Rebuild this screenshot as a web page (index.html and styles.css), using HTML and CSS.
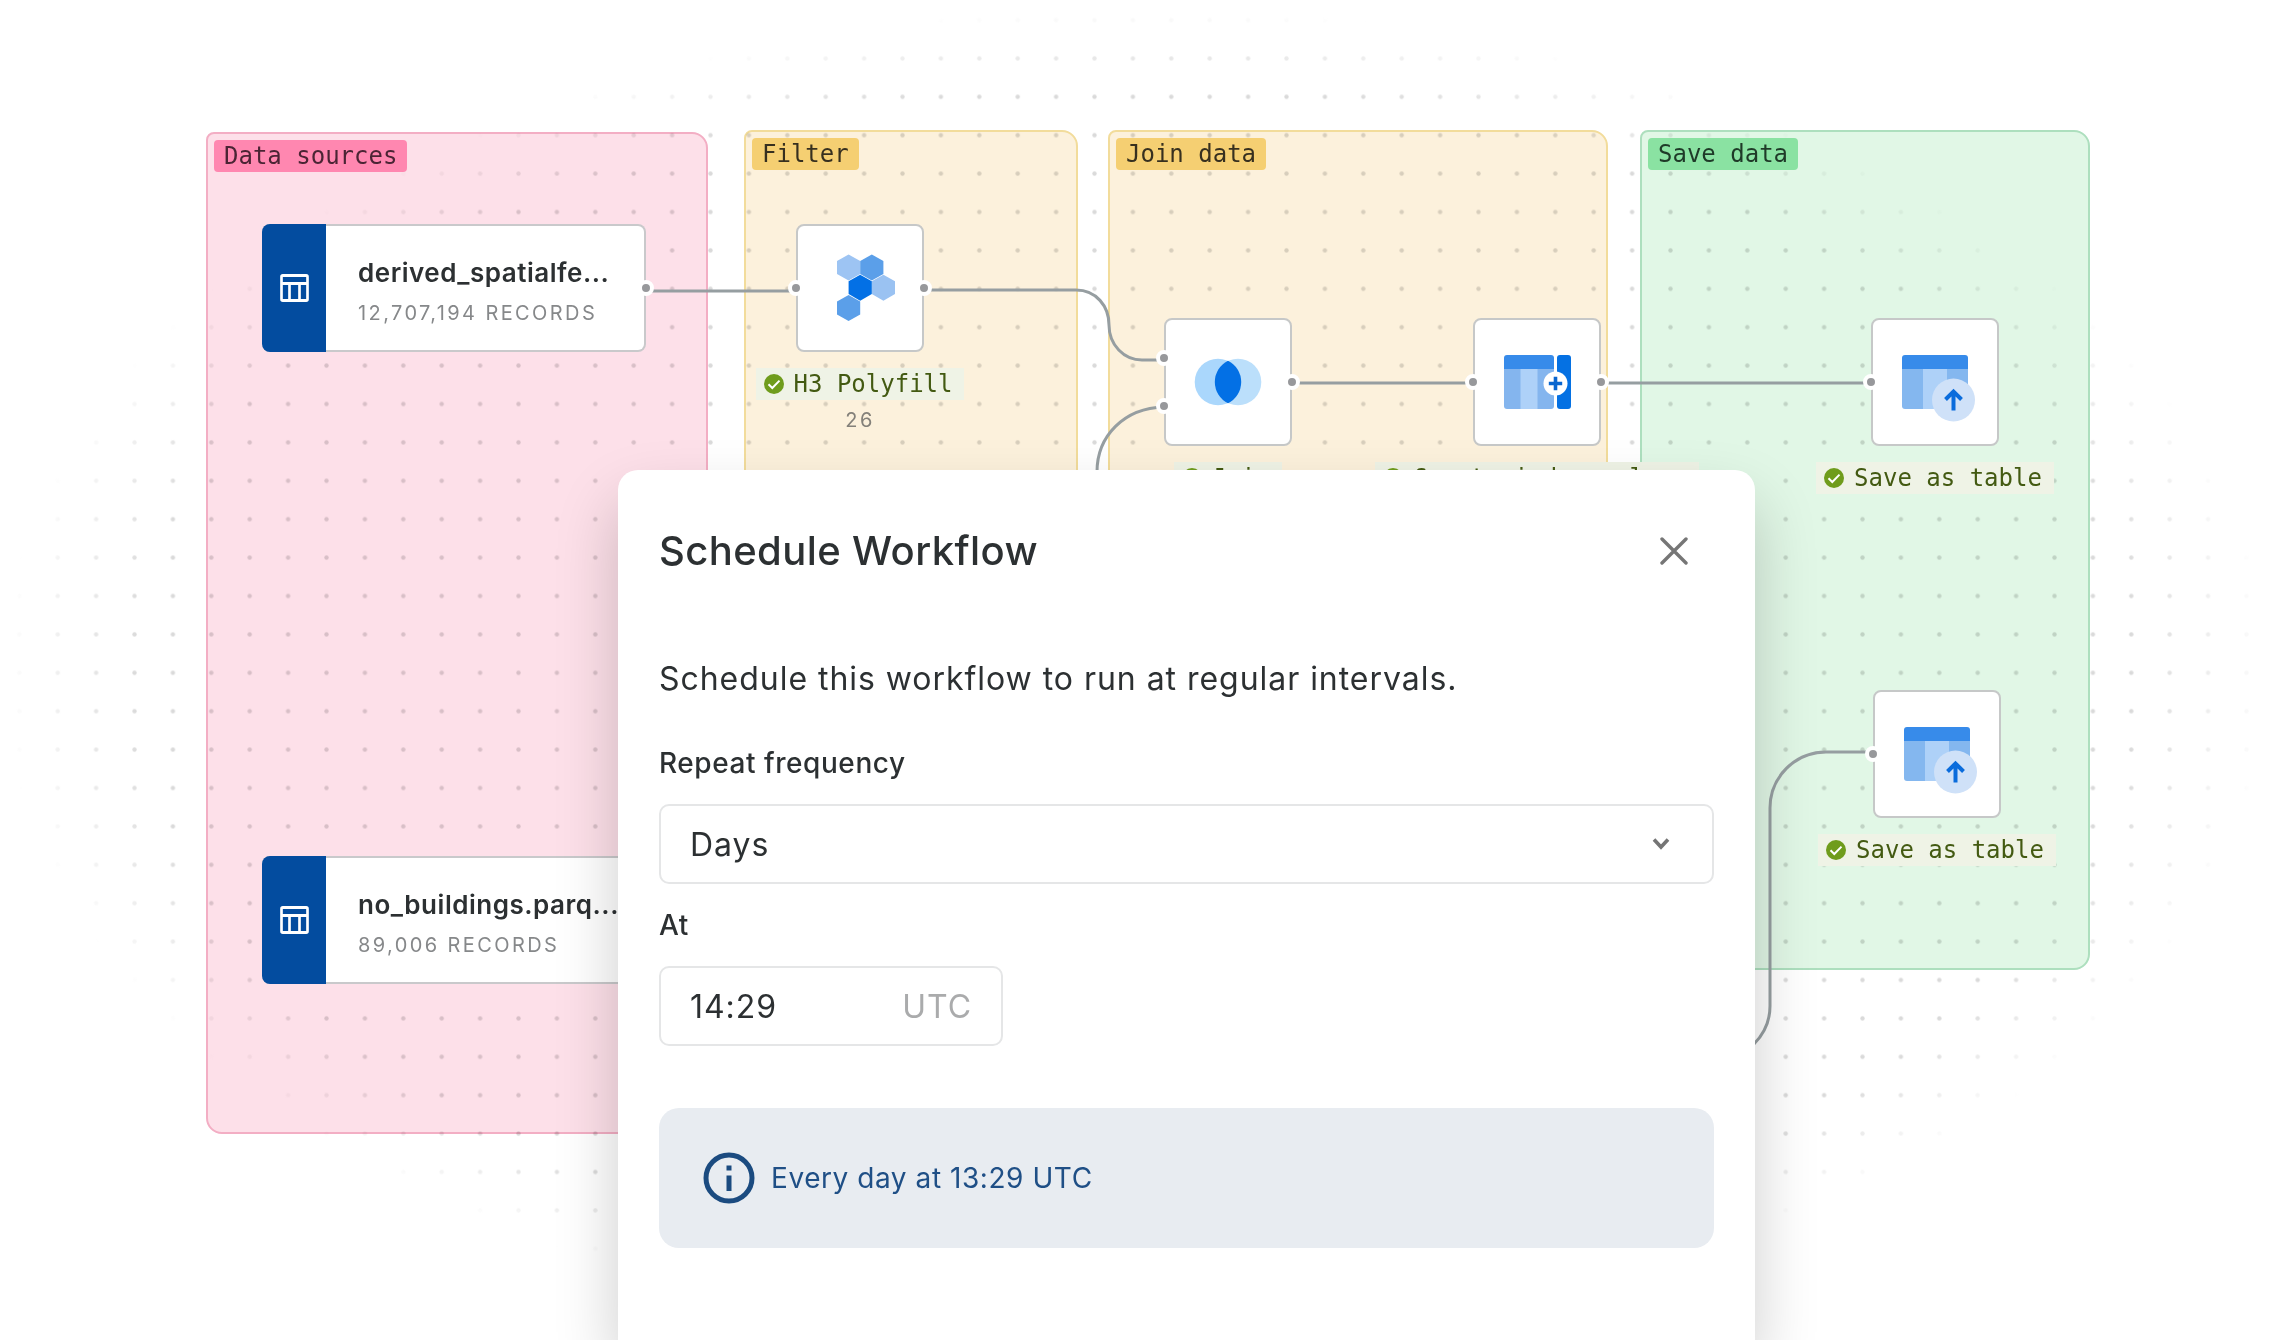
FILE: index.html
```html
<!DOCTYPE html>
<html lang="en">
<head>
    <meta charset="UTF-8">
    <meta name="viewport" content="width=device-width, initial-scale=1.0">
    <title>Schedule Workflow</title>
    <link rel="stylesheet" href="styles.css">
</head>
<body>
    <!-- shared icons -->
    <svg width="0" height="0" class="sprite" aria-hidden="true">
        <symbol id="icon-table" viewBox="0 0 86 84">
            <path fill="#fff" fill-rule="evenodd" d="M8 0H78Q86 0 86 8V76Q86 84 78 84H8Q0 84 0 76V8Q0 0 8 0ZM8 9V24H78V9ZM8 33V75H24V33ZM32 33V75H54V33ZM62 33V75H78V33Z"/>
        </symbol>
        <symbol id="icon-check" viewBox="0 0 20 20">
            <circle cx="10" cy="10" r="10" fill="#6f9c1c"/>
            <path d="M4.5 10.2L8.3 14L15.5 6.6" fill="none" stroke="#fff" stroke-width="2"/>
        </symbol>
        <symbol id="icon-save" viewBox="0 0 128 128">
            <path fill="#84b7ef" d="M31 50H97V91H34Q31 91 31 88Z"/>
            <path fill="#aed1f8" d="M52 50H76V91H52Z"/>
            <path fill="#378bea" d="M34 37H94Q97 37 97 40V51H31V40Q31 37 34 37Z"/>
            <circle cx="82.5" cy="82" r="21.5" fill="#cfe1f8"/>
            <path d="M82.5 92.5V75M74.5 81.5L82.5 73.5L90.5 81.5" fill="none" stroke="#0a6cdc" stroke-width="4"/>
        </symbol>
    </svg>

    <main class="canvas">
        <svg class="layer" aria-hidden="true">
            <defs>
                <pattern id="dots" x="0.1" y="0.8" width="38.4" height="38.4" patternUnits="userSpaceOnUse">
                    <circle cx="19.2" cy="19.2" r="2.2" fill="#dadada"/>
                </pattern>
                <radialGradient id="fade">
                    <stop offset="0.88" stop-color="#fff"/>
                    <stop offset="1" stop-color="#000"/>
                </radialGradient>
                <mask id="dot-mask">
                    <ellipse cx="1137" cy="675" rx="1135" ry="668" fill="url(#fade)"/>
                </mask>
            </defs>
            <rect width="100%" height="100%" fill="url(#dots)" mask="url(#dot-mask)"/>
        </svg>

        <section class="group group-sources"><h2 class="group-tag">Data sources</h2></section>
        <section class="group group-filter"><h2 class="group-tag">Filter</h2></section>
        <section class="group group-join"><h2 class="group-tag">Join data</h2></section>
        <section class="group group-save"><h2 class="group-tag">Save data</h2></section>

        <!-- connections -->
        <svg class="layer edges" aria-hidden="true">
            <path d="M646 291H796"/>
            <path d="M924 290H1076C1096 290 1109 306 1109 325C1109 345 1124 360 1142 360H1164"/>
            <path d="M1164 407C1124 408 1097 436 1097 472V640"/>
            <path d="M1292 383H1473"/>
            <path d="M1601 383H1871"/>
            <path d="M1873 752H1826A56 56 0 0 0 1770 808V1006Q1770 1028 1754 1044"/>
        </svg>

        <article class="source source-a">
            <div class="source-icon"><svg width="29" height="28"><use href="#icon-table"/></svg></div>
            <div class="source-info">
                <h3 class="source-name">derived_spatialfe...</h3>
                <p class="source-count">12,707,194 RECORDS</p>
            </div>
            <span class="port port-out"></span>
        </article>

        <article class="source source-b">
            <div class="source-icon"><svg width="29" height="28"><use href="#icon-table"/></svg></div>
            <div class="source-info">
                <h3 class="source-name">no_buildings.parq...</h3>
                <p class="source-count">89,006 RECORDS</p>
            </div>
        </article>

        <article class="node node-h3">
            <div class="node-box">
                <svg viewBox="0 0 128 128">
                    <defs><path id="hex" d="M0-13L11.6-6.4V6.4L0 13L-11.6 6.4V-6.4Z"/></defs>
                    <use href="#hex" x="52.6" y="43.5" fill="#9dc4f3"/>
                    <use href="#hex" x="75.8" y="43.5" fill="#5b9fe9"/>
                    <use href="#hex" x="87.4" y="63.7" fill="#9ac2f2"/>
                    <use href="#hex" x="52.6" y="84" fill="#5b9fe9"/>
                    <use href="#hex" x="64.2" y="63.7" fill="#0370e5"/>
                </svg>
                <span class="port port-in"></span>
                <span class="port port-out"></span>
            </div>
            <p class="status"><svg width="20" height="20"><use href="#icon-check"/></svg>H3 Polyfill</p>
            <p class="node-count">26</p>
        </article>

        <article class="node node-join">
            <div class="node-box">
                <svg viewBox="0 0 128 128">
                    <circle cx="74" cy="64" r="23.3" fill="#bbdffb"/>
                    <circle cx="54" cy="64" r="23.3" fill="#aad7fc"/>
                    <path d="M64 42.7A23.8 23.8 0 0 1 64 85.3A23.8 23.8 0 0 1 64 42.7Z" fill="#0370e5"/>
                </svg>
                <span class="port port-in port-upper"></span>
                <span class="port port-in port-lower"></span>
                <span class="port port-out"></span>
            </div>
            <p class="status"><svg width="20" height="20"><use href="#icon-check"/></svg>Join</p>
        </article>

        <article class="node node-column">
            <div class="node-box">
                <svg viewBox="0 0 128 128">
                    <path fill="#84b5ee" d="M31 50H81V88Q81 91 78 91H34Q31 91 31 88Z"/>
                    <path fill="#aed1f8" d="M47.5 50H64.5V91H47.5Z"/>
                    <path fill="#378bea" d="M34 37H78Q81 37 81 40V51H31V40Q31 37 34 37Z"/>
                    <rect x="84" y="37" width="14" height="54" rx="3" fill="#0571e3"/>
                    <circle cx="82.5" cy="65.5" r="12" fill="#fff"/>
                    <path d="M75.8 65.5H89.2M82.5 58.8V72.2" stroke="#0a66cf" stroke-width="3.6"/>
                </svg>
                <span class="port port-in"></span>
                <span class="port port-out"></span>
            </div>
            <p class="status"><svg width="20" height="20"><use href="#icon-check"/></svg>Create index column</p>
        </article>

        <article class="node node-save-a">
            <div class="node-box">
                <svg><use href="#icon-save"/></svg>
                <span class="port port-in"></span>
            </div>
            <p class="status"><svg width="20" height="20"><use href="#icon-check"/></svg>Save as table</p>
        </article>

        <article class="node node-save-b">
            <div class="node-box">
                <svg><use href="#icon-save"/></svg>
                <span class="port port-in"></span>
            </div>
            <p class="status"><svg width="20" height="20"><use href="#icon-check"/></svg>Save as table</p>
        </article>
    </main>

    <div class="modal" role="dialog" aria-labelledby="modal-title">
        <header class="modal-header">
            <h1 id="modal-title">Schedule Workflow</h1>
            <button class="close-btn" type="button" aria-label="Close">
                <svg width="28" height="28" viewBox="0 0 28 28">
                    <path d="M2 2L26 26M26 2L2 26" stroke="#767676" stroke-width="3.4" stroke-linecap="round"/>
                </svg>
            </button>
        </header>

        <p class="modal-text">Schedule this workflow to run at regular intervals.</p>

        <form class="schedule-form">
            <div class="form-group">
                <label for="frequency">Repeat frequency</label>
                <div class="field">
                    <select id="frequency">
                        <option>Hours</option>
                        <option selected>Days</option>
                        <option>Weeks</option>
                        <option>Months</option>
                    </select>
                    <svg class="chevron" width="18" height="14" viewBox="0 0 18 14" aria-hidden="true">
                        <path d="M2 2.5L9 10L16 2.5" fill="none" stroke="#757575" stroke-width="3.6"/>
                    </svg>
                </div>
            </div>
            <div class="form-group">
                <label for="time">At</label>
                <div class="field field-time">
                    <input type="text" id="time" value="14:29">
                    <span class="suffix">UTC</span>
                </div>
            </div>
        </form>

        <div class="notice">
            <svg width="52" height="52" viewBox="0 0 52 52" aria-hidden="true">
                <circle cx="26" cy="26" r="23" fill="none" stroke="#1b4b80" stroke-width="5"/>
                <path d="M26 13.5V18.5M26 23.5V39" stroke="#1b4b80" stroke-width="5"/>
            </svg>
            <span>Every day at 13:29 UTC</span>
        </div>
    </div>
</body>
</html>
```
FILE: styles.css
```css
* {
    box-sizing: border-box;
    margin: 0;
}
body {
    height: 100vh;
    overflow: hidden;
    background-color: #fff;
    color: #2c3032;
    font-family: Inter, sans-serif;
}
.sprite {
    position: absolute;
}

/* Canvas */
.canvas {
    position: relative;
    height: 100%;
}
.layer {
    position: absolute;
    top: 0;
    left: 0;
    width: 100%;
    height: 100%;
}
.edges path {
    fill: none;
    stroke: #969ea1;
    stroke-width: 3;
}
.group {
    position: absolute;
    padding: 6px;
    border: 2px solid;
    border-radius: 8px 16px 16px 16px;
    mix-blend-mode: multiply;
}
.group-tag {
    width: max-content;
    padding: 0 10px;
    border-radius: 4px;
    font: 24px/32px "DejaVu Sans Mono", monospace;
}
.group-sources {
    left: 206px;
    top: 132px;
    width: 502px;
    height: 1002px;
    background-color: #fde0e9;
    border-color: #f3aec4;
}
.group-sources .group-tag {
    background-color: #ff87b0;
    color: #4b2434;
}
.group-filter {
    left: 744px;
    top: 130px;
    width: 334px;
    height: 840px;
    background-color: #fcf1dc;
    border-color: #f2dc9b;
}
.group-join {
    left: 1108px;
    top: 130px;
    width: 500px;
    height: 840px;
    background-color: #fcf1dc;
    border-color: #f2dc9b;
}
.group-filter .group-tag, .group-join .group-tag {
    background-color: #f5cf72;
    color: #37301f;
}
.group-save {
    left: 1640px;
    top: 130px;
    width: 450px;
    height: 840px;
    background-color: #e1f7e6;
    border-color: #addfbe;
}
.group-save .group-tag {
    background-color: #8ae2a2;
    color: #1f3a28;
}

/* Nodes */
.source {
    position: absolute;
    left: 262px;
    display: flex;
    width: 384px;
    height: 128px;
    border: 2px solid #c9c9cb;
    border-left: none;
    border-radius: 8px;
    background-color: #fff;
}
.source-a {
    top: 224px;
}
.source-b {
    top: 856px;
}
.source-icon {
    display: flex;
    align-items: center;
    justify-content: center;
    width: 64px;
    margin: -2px 0;
    border-radius: 8px 0 0 8px;
    background-color: #034c9f;
}
.source-info {
    display: flex;
    flex-direction: column;
    justify-content: center;
    gap: 8px;
    padding: 10px 0 0 32px;
}
.source-name {
    font-size: 26px;
    font-weight: 600;
    line-height: 32px;
    letter-spacing: 0.02em;
}
.source-count {
    color: #86888a;
    font-size: 20px;
    line-height: 32px;
    letter-spacing: 0.12em;
}
.node {
    position: absolute;
    display: flex;
    flex-direction: column;
    align-items: center;
    width: 128px;
}
.node-h3 {
    left: 796px;
    top: 224px;
}
.node-join {
    left: 1164px;
    top: 318px;
}
.node-column {
    left: 1473px;
    top: 318px;
}
.node-save-a {
    left: 1871px;
    top: 318px;
}
.node-save-b {
    left: 1873px;
    top: 690px;
}
.node-box {
    position: relative;
    width: 128px;
    height: 128px;
    border: 2px solid #c6c8c8;
    border-radius: 8px;
    background-color: #fff;
}
.node-box svg {
    display: block;
    width: 128px;
    height: 128px;
    margin: -2px;
}
.port {
    position: absolute;
    top: 50%;
    width: 16px;
    height: 16px;
    margin-top: -8px;
    border: 4px solid #fff;
    border-radius: 50%;
    background-color: #97989b;
}
.port-in {
    left: -10px;
}
.port-out {
    right: -10px;
}
.port-upper {
    top: 38px;
}
.port-lower {
    top: 86px;
}
.status {
    display: flex;
    align-items: center;
    gap: 10px;
    margin-top: 16px;
    padding: 0 12px 0 8px;
    background-color: #eff3e6;
    color: #435a12;
    font: 24px/32px "DejaVu Sans Mono", monospace;
    white-space: nowrap;
}
.node-count {
    margin-top: 4px;
    color: #84817a;
    font-size: 20px;
    line-height: 32px;
    letter-spacing: 0.12em;
}

/* Modal */
.modal {
    position: absolute;
    top: 470px;
    bottom: 0;
    left: 618px;
    width: 50%;
    padding: 57px 41px 0;
    border-radius: 20px 20px 0 0;
    background-color: #fff;
    box-shadow: 0 32px 64px rgba(0, 0, 0, 0.2);
}
.modal-header {
    display: flex;
    align-items: center;
    justify-content: space-between;
}
.modal-header h1 {
    font-size: 40px;
    font-weight: 500;
    line-height: 48px;
    letter-spacing: 0.01em;
}
.close-btn {
    display: flex;
    padding: 0;
    margin-right: 26px;
    border: none;
    background: none;
    cursor: pointer;
}
.modal-text {
    margin-top: 80px;
    font-size: 32px;
    line-height: 48px;
    letter-spacing: 0.03em;
}
.schedule-form {
    display: flex;
    flex-direction: column;
    gap: 21px;
    margin-top: 40px;
}
label {
    display: block;
    margin-bottom: 21px;
    font-size: 28px;
    font-weight: 500;
    line-height: 40px;
    letter-spacing: 0.02em;
}
.field {
    position: relative;
    display: flex;
    align-items: center;
    height: 80px;
    border: 2px solid #e5e6e7;
    border-radius: 10px;
}
.field-time {
    width: 344px;
    padding-right: 29px;
}
select, input {
    width: 100%;
    min-width: 0;
    height: 100%;
    padding: 0 29px;
    border: none;
    outline: none;
    background: none;
    color: inherit;
    font: 32px Inter, sans-serif;
    letter-spacing: 0.03em;
    appearance: none;
}
.chevron {
    position: absolute;
    right: 42px;
    pointer-events: none;
}
.suffix {
    color: #aaabac;
    font-size: 32px;
    letter-spacing: 0.03em;
}
.notice {
    display: flex;
    align-items: center;
    gap: 16px;
    height: 140px;
    margin-top: 62px;
    padding: 0 44px;
    border-radius: 20px;
    background-color: #e8ecf1;
    color: #1f4f86;
    font-size: 28px;
    letter-spacing: 0.02em;
}
```
